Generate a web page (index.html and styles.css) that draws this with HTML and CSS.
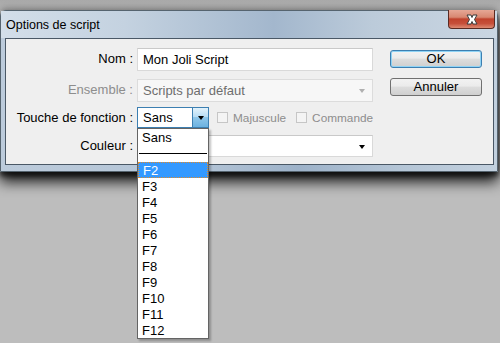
FILE: index.html
```html
<!DOCTYPE html>
<html>
<head>
    <title>Options de script</title>
    <link rel="stylesheet" href="styles.css">
</head>
<body>
    <div class="window">
        <div class="titlebar">
            <span class="title">Options de script</span>
            <div class="close-btn">
                <svg width="18" height="11" viewBox="0 0 18 11">
                    <path d="M4 1 L8 1 L9 3.5 L10 1 L14 1 L11.5 5.5 L14 10 L10 10 L9 7.5 L8 10 L4 10 L6.5 5.5 Z" fill="#fff" stroke="#3a3a3a" stroke-width="1" stroke-linejoin="round"/>
                </svg>
            </div>
        </div>
        <div class="client">
            <div class="form">
                <label class="lbl">Nom :</label>
                <div class="field">Mon Joli Script</div>

                <label class="lbl disabled">Ensemble :</label>
                <div class="field select disabled">
                    Scripts par défaut
                    <span class="arrow gray"></span>
                </div>

                <label class="lbl">Touche de fonction :</label>
                <div class="row-key">
                    <div class="keysel">
                        <span>Sans</span>
                        <div class="keybtn"><span class="arrow"></span></div>
                        <ul class="droplist">
                            <li>Sans</li>
                            <li class="sep"></li>
                            <li class="selected">F2</li>
                            <li>F3</li>
                            <li>F4</li>
                            <li>F5</li>
                            <li>F6</li>
                            <li>F7</li>
                            <li>F8</li>
                            <li>F9</li>
                            <li>F10</li>
                            <li>F11</li>
                            <li>F12</li>
                        </ul>
                    </div>
                    <label class="check"><span class="box"></span>Majuscule</label>
                    <label class="check"><span class="box"></span>Commande</label>
                </div>

                <label class="lbl">Couleur :</label>
                <div class="field select short">
                    <span class="arrow"></span>
                </div>
            </div>
            <div class="buttons">
                <button class="btn default">OK</button>
                <button class="btn">Annuler</button>
            </div>
        </div>
    </div>
</body>
</html>
```

FILE: styles.css
```css
body {
    margin: 0;
    padding: 0;
    width: 500px;
    height: 343px;
    overflow: hidden;
    font-family: 'Liberation Sans', Arial, sans-serif;
    font-size: 13px;
    color: #000;
    background: linear-gradient(to bottom, #a9a9a9 0px, #b4b4b4 10px, #bdbdbd 10px, #bdbdbd 100%);
}

.window {
    margin-top: 10px;
    width: 496px;
    height: 160px;
    border: 1px solid #56646f;
    border-radius: 6px 6px 0 0;
    background: linear-gradient(to right, #bccbdb 0%, #b3c4d6 40%, #9db2c9 60%, #b4c5d6 80%, #c2d0de 100%);
    box-shadow: 0 10px 14px rgba(0, 0, 0, 0.85), 0 4px 5px rgba(0, 0, 0, 0.6), 0 -2px 6px rgba(0, 0, 0, 0.25);
    position: relative;
}

.titlebar {
    height: 27px;
    position: relative;
    background: linear-gradient(to right, #d3dee9 0%, #c4d2e0 25%, #a3b7cd 55%, #bccbda 75%, #cad6e2 100%);
}

.title {
    position: absolute;
    left: 5px;
    top: 7px;
    font-size: 12.5px;
    color: #000;
}

.close-btn {
    position: absolute;
    right: 2px;
    top: -1px;
    width: 45px;
    height: 18px;
    border: 1px solid #5a2a22;
    border-top: none;
    border-radius: 0 0 4px 4px;
    background: linear-gradient(to bottom, #e6a896 0%, #d88872 40%, #c0432d 50%, #c64f3a 75%, #dd8a72 100%);
    display: flex;
    justify-content: center;
    align-items: center;
}

.client {
    margin: 0 3px 0 4px;
    height: 125px;
    border: 1px solid #4a5866;
    background: #efefef;
    display: flex;
}

.form {
    display: grid;
    grid-template-columns: 127px 236px;
    grid-template-rows: 31px 28px 28px 22px;
    column-gap: 4px;
    margin-top: 9px;
    align-items: start;
}

.lbl {
    text-align: right;
    white-space: nowrap;
    line-height: 22px;
}

.lbl.disabled {
    color: #8d8d8d;
}

.field {
    height: 21px;
    border: 1px solid #d9d9d9;
    border-top-color: #c9c9c9;
    background: #fff;
    padding-left: 5px;
    line-height: 21px;
    position: relative;
    box-sizing: content-box;
    width: 229px;
}

.field.disabled {
    background: #f7f7f7;
    color: #6e6e6e;
    border-color: #dcdcdc;
}

.field.short {
    height: 20px;
}

.arrow {
    position: absolute;
    right: 7px;
    top: 9px;
    width: 0;
    height: 0;
    border-left: 3.5px solid transparent;
    border-right: 3.5px solid transparent;
    border-top: 4px solid #000;
}

.arrow.gray {
    border-top-color: #b0b0b0;
}

.row-key {
    display: flex;
    align-items: center;
    height: 21px;
}

.keysel {
    position: relative;
    flex-shrink: 0;
    width: 70px;
    height: 19px;
    border: 1px solid #3c7fb1;
    background: #fff;
    display: flex;
    align-items: center;
}

.keysel > span {
    padding-left: 5px;
    flex: 1;
}

.keybtn {
    width: 15px;
    height: 19px;
    border-left: 1px solid #3c7fb1;
    background: linear-gradient(to bottom, #e3f2fb 0%, #b9def5 45%, #8fc7ea 50%, #6cb2e0 100%);
    position: relative;
}

.keybtn .arrow {
    right: 4px;
    top: 8px;
}

.droplist {
    position: absolute;
    left: -1px;
    top: 20px;
    width: 70px;
    margin: 0;
    padding: 0;
    list-style: none;
    border: 1px solid #646464;
    background: #fff;
    box-shadow: 2px 2px 2px rgba(0, 0, 0, 0.25);
    z-index: 5;
}

.droplist li {
    height: 16px;
    line-height: 17px;
    padding-left: 4px;
}

.droplist li.sep {
    height: 17px;
    padding: 0 1px;
    display: flex;
    align-items: center;
}

.droplist li.sep::after {
    content: '';
    display: block;
    width: 100%;
    border-top: 1px solid #000;
}

.droplist li.selected {
    background: #3399ff;
    color: #fff;
    outline: 1px dotted #e08a2a;
    outline-offset: -1px;
    padding-left: 5px;
}

.check {
    display: flex;
    flex-shrink: 0;
    align-items: center;
    color: #8d8d8d;
    font-size: 11.8px;
    margin-left: 8px;
}

.check + .check {
    margin-left: 10px;
}

.box {
    width: 9px;
    height: 9px;
    border: 1px solid #c6c6c6;
    background: #f4f4f4;
    margin-right: 5px;
}

.buttons {
    display: flex;
    flex-direction: column;
    gap: 10px;
    margin: 11px 0 0 17px;
}

.btn {
    width: 92px;
    height: 18px;
    padding: 0;
    font-family: 'Liberation Sans', Arial, sans-serif;
    font-size: 13px;
    line-height: 14px;
    color: #000;
    border: 1px solid #707070;
    border-radius: 3px;
    background: linear-gradient(to bottom, #f2f2f2 0%, #ebebeb 45%, #dddddd 50%, #cfcfcf 100%);
}

.btn.default {
    border-color: #3c7fb1;
    box-shadow: inset 0 0 0 1px #8fd3f5;
}
```
